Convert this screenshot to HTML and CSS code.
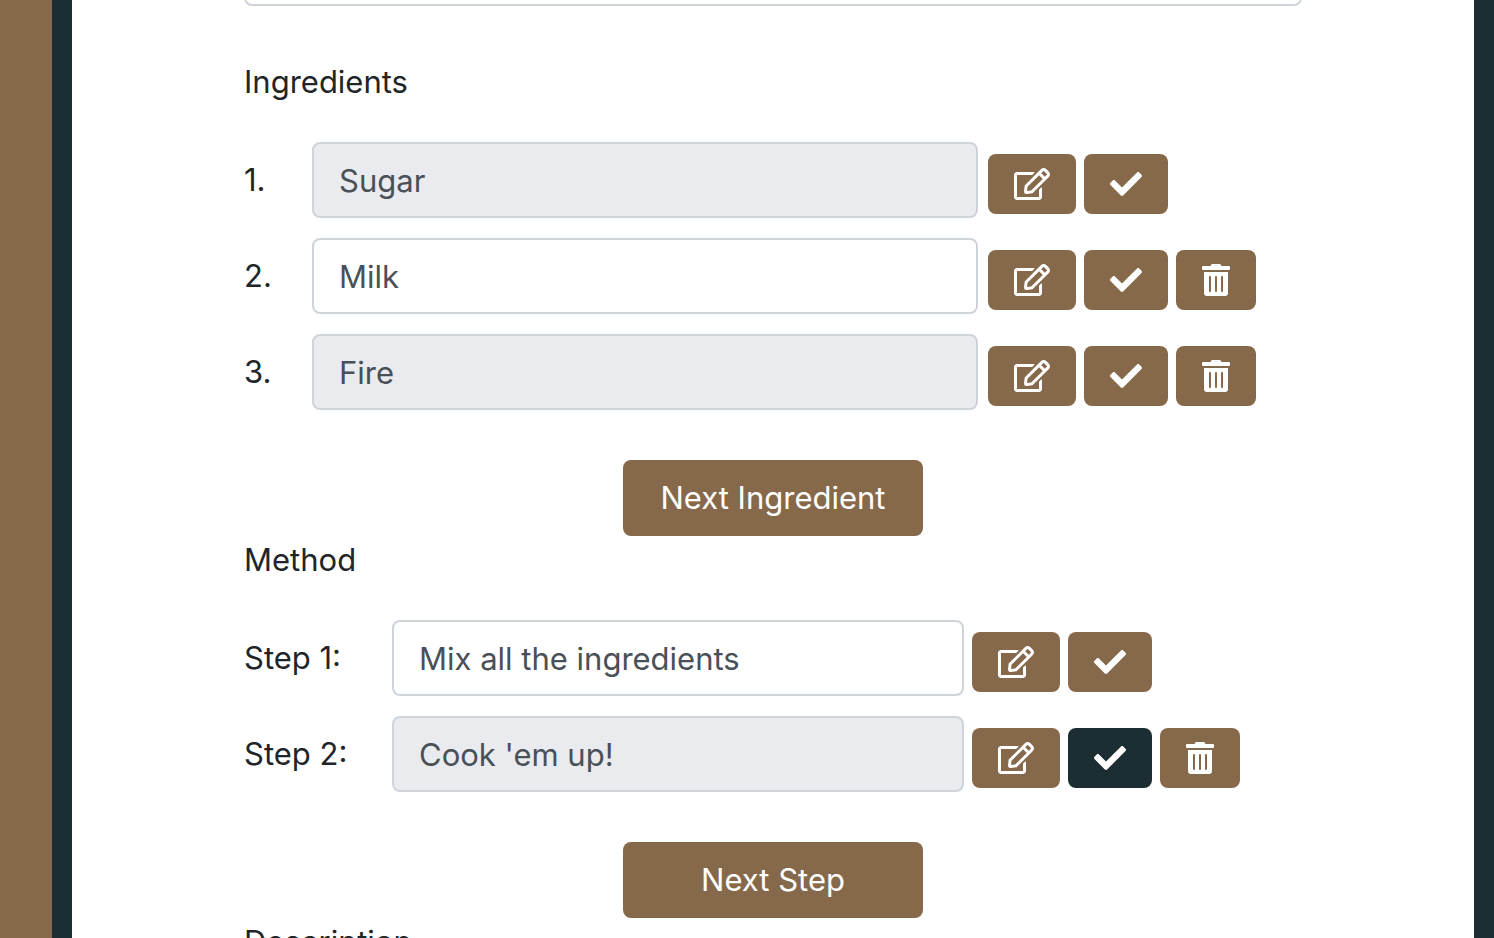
FILE: index.html
```html
<!DOCTYPE html>
<html lang="en">
<head>
<meta charset="utf-8">
<meta name="viewport" content="width=device-width, initial-scale=1">
<title>Recipe</title>
<link rel="stylesheet" href="styles.css">
</head>
<body>
<svg class="sprite" aria-hidden="true">
  <symbol id="edit" viewBox="0 0 576 512"><path d="M402.3 344.9l32-32c5-5 13.7-1.5 13.7 5.7V464c0 26.500-21.500 48-48 48H48c-26.500 0-48-21.500-48-48V112c0-26.500 21.500-48 48-48h273.500c7.100 0 10.700 8.600 5.700 13.700l-32 32c-1.500 1.500-3.500 2.300-5.700 2.300H48v352h352V350.500c0-2.100.8-4.100 2.300-5.600zm156.600-201.800L296.300 405.700l-90.400 10c-26.200 2.900-48.500-19.200-45.600-45.600l10-90.400L432.900 17.100c22.900-22.900 59.900-22.900 82.700 0l43.200 43.200c22.900 22.900 22.900 60 .1 82.800zM460.100 174L402 115.900 216.200 301.800l-7.300 65.300 65.300-7.300L460.100 174zm64.800-79.700l-43.200-43.200c-4.100-4.100-10.800-4.100-14.800 0L436 82l58.100 58.100 30.900-30.900c4-4.200 4-10.800-.1-14.900z"/></symbol>
  <symbol id="check" viewBox="0 0 512 512"><path d="M173.898 439.404l-166.400-166.400c-9.997-9.997-9.997-26.206 0-36.204l36.203-36.204c9.997-9.998 26.207-9.998 36.204 0L192 312.690 432.095 72.596c9.997-9.997 26.207-9.997 36.204 0l36.203 36.204c9.997 9.997 9.997 26.206 0 36.204l-294.400 294.401c-9.998 9.997-26.207 9.997-36.204-.001z"/></symbol>
  <symbol id="trash" viewBox="0 0 448 512"><path d="M32 464a48 48 0 0 0 48 48h288a48 48 0 0 0 48-48V128H32zm272-256a16 16 0 0 1 32 0v224a16 16 0 0 1-32 0zm-96 0a16 16 0 0 1 32 0v224a16 16 0 0 1-32 0zm-96 0a16 16 0 0 1 32 0v224a16 16 0 0 1-32 0zM432 32H312l-9.400-18.700A24 24 0 0 0 281.100 0H166.800a23.720 23.720 0 0 0-21.400 13.300L136 32H16A16 16 0 0 0 0 48v32a16 16 0 0 0 16 16h416a16 16 0 0 0 16-16V48a16 16 0 0 0-16-16z"/></symbol>
</svg>
<main class="card">
  <form class="recipe">
    <input class="field field-top" type="text" aria-label="Recipe name">

    <h2 class="heading">Ingredients</h2>
    <div class="rows">
      <div class="row">
        <label for="ing1">1.</label>
        <input class="field" id="ing1" type="text" value="Sugar" readonly>
        <div class="actions">
          <button class="btn edit" type="button" aria-label="Edit"><svg class="icon"><use href="#edit"/></svg></button>
          <button class="btn check" type="button" aria-label="Save"><svg class="icon"><use href="#check"/></svg></button>
        </div>
      </div>
      <div class="row">
        <label for="ing2">2.</label>
        <input class="field" id="ing2" type="text" value="Milk">
        <div class="actions">
          <button class="btn edit" type="button" aria-label="Edit"><svg class="icon"><use href="#edit"/></svg></button>
          <button class="btn check" type="button" aria-label="Save"><svg class="icon"><use href="#check"/></svg></button>
          <button class="btn trash" type="button" aria-label="Delete"><svg class="icon"><use href="#trash"/></svg></button>
        </div>
      </div>
      <div class="row">
        <label for="ing3">3.</label>
        <input class="field" id="ing3" type="text" value="Fire" readonly>
        <div class="actions">
          <button class="btn edit" type="button" aria-label="Edit"><svg class="icon"><use href="#edit"/></svg></button>
          <button class="btn check" type="button" aria-label="Save"><svg class="icon"><use href="#check"/></svg></button>
          <button class="btn trash" type="button" aria-label="Delete"><svg class="icon"><use href="#trash"/></svg></button>
        </div>
      </div>
    </div>
    <button class="btn next" type="button">Next Ingredient</button>

    <h2 class="heading">Method</h2>
    <div class="rows steps">
      <div class="row">
        <label for="step1">Step 1:</label>
        <input class="field" id="step1" type="text" value="Mix all the ingredients">
        <div class="actions">
          <button class="btn edit" type="button" aria-label="Edit"><svg class="icon"><use href="#edit"/></svg></button>
          <button class="btn check" type="button" aria-label="Save"><svg class="icon"><use href="#check"/></svg></button>
        </div>
      </div>
      <div class="row">
        <label for="step2">Step 2:</label>
        <input class="field" id="step2" type="text" value="Cook 'em up!" readonly>
        <div class="actions">
          <button class="btn edit" type="button" aria-label="Edit"><svg class="icon"><use href="#edit"/></svg></button>
          <button class="btn check active" type="button" aria-label="Save"><svg class="icon"><use href="#check"/></svg></button>
          <button class="btn trash" type="button" aria-label="Delete"><svg class="icon"><use href="#trash"/></svg></button>
        </div>
      </div>
    </div>
    <button class="btn next" type="button">Next Step</button>

    <h2 class="heading">Description</h2>
  </form>
</main>
</body>
</html>
```
FILE: styles.css
```css
:root {
  --brown: #86694a;
  --dark: #1c2e31;
}

* {
  box-sizing: border-box;
}

body {
  margin: 0;
  height: 100vh;
  overflow: hidden;
  padding-left: 52px;
  background: var(--brown);
  color: #212529;
  font: 31px/48px Inter, "Liberation Sans", sans-serif;
}

.sprite {
  display: none;
}

.card {
  height: 100%;
  overflow: hidden;
  padding: 0 172px;
  border: solid var(--dark);
  border-width: 0 20px;
  background: #fff;
}

.recipe {
  display: flex;
  flex-direction: column;
}

.heading {
  margin: 0 0 36px;
  font: inherit;
}

.field {
  width: 100%;
  min-width: 0;
  height: 76px;
  padding: 0 25px;
  border: 2px solid #ced4da;
  border-radius: 8px;
  background: #fff;
  color: #495057;
  font: inherit;
}

.field:read-only {
  background: #e9ebef;
}

.field-top {
  margin: -70px 0 52px;
}

.rows {
  display: grid;
  gap: 20px;
}

.row {
  display: grid;
  grid-template-columns: 68px minmax(0, 1fr) 324px;
  align-items: center;
}

.steps .row {
  grid-template-columns: 148px minmax(0, 1fr) 338px;
}

.actions {
  display: flex;
  align-self: end;
  gap: 8px;
  padding: 0 0 4px 10px;
}

.steps .actions {
  padding-left: 8px;
}

.btn {
  display: flex;
  align-items: center;
  justify-content: center;
  height: 60px;
  padding: 0;
  border: 0;
  border-radius: 8px;
  background: var(--brown);
  color: #fff;
  font: inherit;
  cursor: pointer;
}

.btn.active {
  background: var(--dark);
}

.edit {
  width: 88px;
}

.check {
  width: 84px;
}

.trash {
  width: 80px;
}

.icon {
  width: 32px;
  height: 32px;
  fill: currentColor;
}

.edit .icon {
  width: 36px;
}

.trash .icon {
  width: 28px;
}

.next {
  align-self: center;
  width: 300px;
  height: 76px;
  margin-top: 50px;
}
```
